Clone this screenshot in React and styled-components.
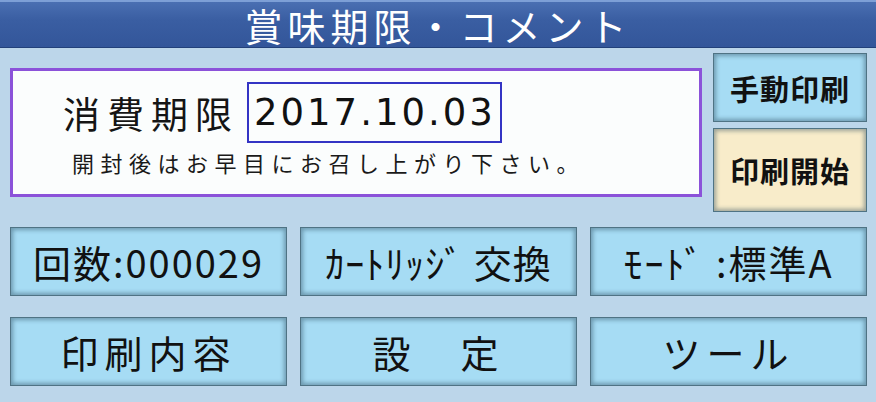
import React from "react";
import styled, { createGlobalStyle } from "styled-components";

const GlobalStyle = createGlobalStyle`
    html, body {
        margin: 0;
        padding: 0;
        background: #bcd6ea;
    }
    body {
        font-family: "Noto Sans CJK JP", "Noto Sans", sans-serif;
    }
`;

const Screen = styled.div`
    width: 876px;
    height: 402px;
    background: #bcd6ea;
    overflow: hidden;
`;

const Header = styled.div`
    height: 48px;
    box-sizing: border-box;
    border-top: 2px solid #7d9fd6;
    border-bottom: 1px solid #22417a;
    background: linear-gradient(180deg, #4a6fb2 0%, #3a5ea2 40%, #33569a 100%);
    display: flex;
    align-items: center;
    justify-content: center;
    color: #ffffff;
    font-size: 38px;
    line-height: 44px;
    letter-spacing: 5px;
`;

const Body = styled.div`
    padding: 5px 9px 0 10px;
`;

const Top = styled.div`
    display: flex;
    gap: 11px;
    align-items: flex-start;
`;

const Panel = styled.div`
    margin-top: 15px;
    width: 692px;
    height: 129px;
    box-sizing: border-box;
    border: 3px solid #8b52d9;
    background: #fbfdfd;
    padding: 11px 0 0 50px;
    display: flex;
    flex-direction: column;
`;

const DateRow = styled.div`
    display: flex;
    align-items: center;
`;

const Label = styled.span`
    font-size: 37px;
    letter-spacing: 7px;
    color: #151515;
    margin-right: 8px;
`;

const DateBox = styled.div`
    width: 255px;
    height: 61px;
    box-sizing: border-box;
    border: 2px solid #3434c4;
    display: flex;
    align-items: center;
    padding-left: 5px;
    font-family: "DejaVu Sans", "Noto Sans", sans-serif;
    font-size: 37px;
    letter-spacing: 3px;
    color: #111;
`;

const Note = styled.div`
    margin: 3px 0 0 9px;
    font-size: 22px;
    letter-spacing: 6.5px;
    color: #1a1a1a;
`;

const Side = styled.div`
    width: 154px;
    display: flex;
    flex-direction: column;
    gap: 6px;
`;

const Button = styled.div`
    height: ${(p) => p.$h || 69}px;
    box-sizing: border-box;
    border: 1px solid #4f7384;
    background: ${(p) => (p.$yellow ? "#f8ecca" : "#a6dcf4")};
    box-shadow: inset 0 0 4px 2px rgba(40, 70, 90, 0.45);
    display: flex;
    align-items: center;
    justify-content: center;
    color: #111;
    font-size: ${(p) => p.$size || 38}px;
    font-weight: ${(p) => (p.$bold ? 700 : 400)};
    letter-spacing: ${(p) => p.$spacing || 2}px;
    white-space: pre;
`;

const Grid = styled.div`
    margin-top: 15px;
    display: grid;
    grid-template-columns: repeat(3, 277px);
    grid-auto-rows: 69px;
    column-gap: 13px;
    row-gap: 21px;
`;

export default function App() {
    return (
        <Screen>
            <GlobalStyle />
            <Header>賞味期限・コメント</Header>
            <Body>
                <Top>
                    <Panel>
                        <DateRow>
                            <Label>消費期限</Label>
                            <DateBox>2017.10.03</DateBox>
                        </DateRow>
                        <Note>開封後はお早目にお召し上がり下さい。</Note>
                    </Panel>
                    <Side>
                        <Button $h={69} $size={29} $bold $spacing={1}>
                            手動印刷
                        </Button>
                        <Button $h={84} $size={29} $bold $spacing={1} $yellow>
                            印刷開始
                        </Button>
                    </Side>
                </Top>
                <Grid>
                    <Button>回数:000029</Button>
                    <Button $spacing={1}>ｶｰﾄﾘｯｼﾞ 交換</Button>
                    <Button>ﾓｰﾄﾞ :標準A</Button>
                    <Button $spacing={6}>印刷内容</Button>
                    <Button $spacing={6}>設　定</Button>
                    <Button $spacing={6}>ツール</Button>
                </Grid>
            </Body>
        </Screen>
    );
}
